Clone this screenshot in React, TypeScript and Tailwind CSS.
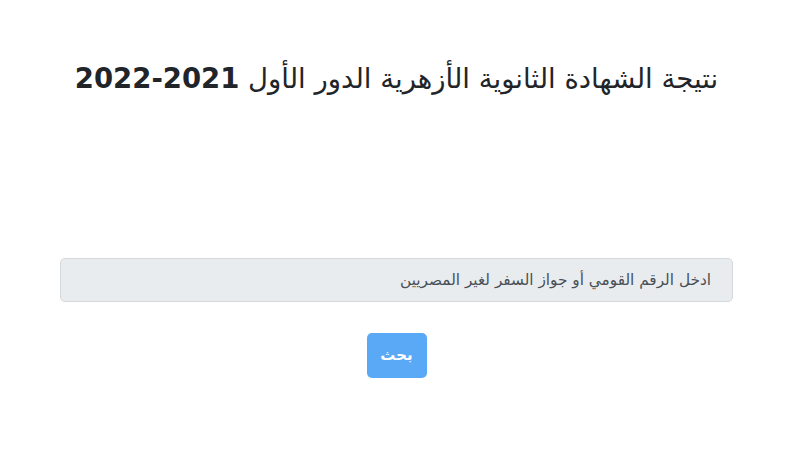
import React from "react";

export default function App() {
  return (
    <div
      dir="rtl"
      className="w-[800px] h-[450px] bg-white flex flex-col items-center pr-[7px] text-[#212529]"
      style={{ fontFamily: '"DejaVu Sans", "Noto Sans", sans-serif' }}
    >
      <h2 className="mt-[58px] text-[27.5px] leading-[40px] font-normal tracking-[-0.6px]">
        نتيجة الشهادة الثانوية الأزهرية الدور الأول <b className="font-bold">2021-2022</b>
      </h2>
      <div className="mt-[160px] w-[673px] h-[44px] rounded-[5px] border border-[#d6d9dc] bg-[#e9ecef] flex items-center px-[21px] text-[15.3px] text-[#495057]">
        ادخل الرقم القومي أو جواز السفر لغير المصريين
      </div>
      <button className="mt-[31px] w-[60px] h-[45px] rounded-[5px] bg-[#5aa9f7] text-white text-[15px] font-bold">
        بحث
      </button>
    </div>
  );
}
